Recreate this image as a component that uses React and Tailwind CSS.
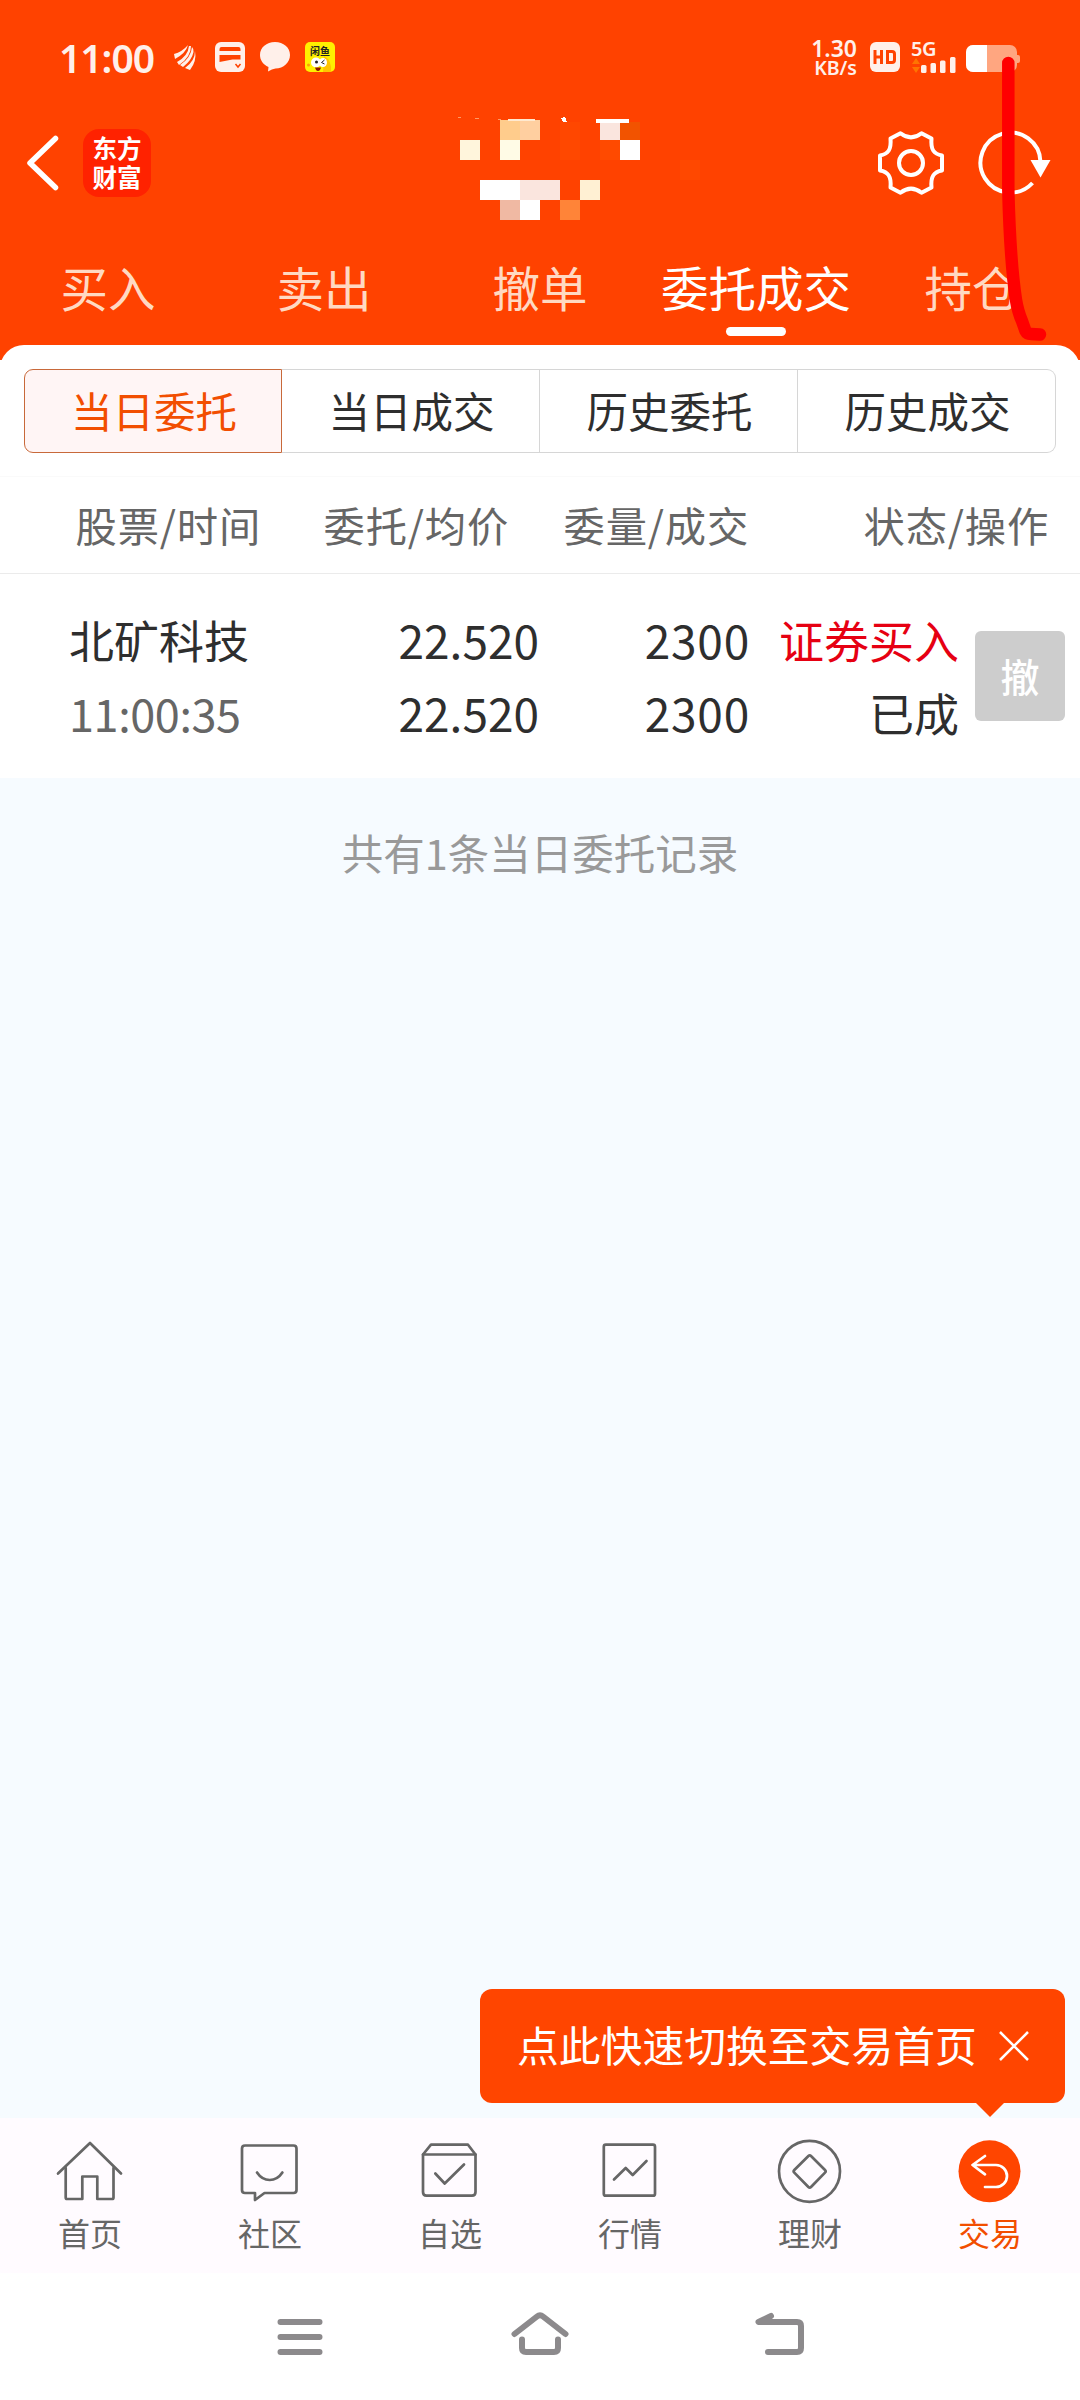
import React from "react";

const tabs = ["买入", "卖出", "撤单", "委托成交", "持仓"];
const segments = ["当日委托", "当日成交", "历史委托", "历史成交"];

const mosaic = [
    [500, 120, "#ffcc8c"], [520, 120, "#ffcfa0"], [560, 122, "#ff4700"], [600, 122, "#fae5de"], [620, 122, "#f25300"],
    [460, 140, "#fff5dc"], [500, 140, "#fffbe6"], [560, 140, "#ff4800"], [600, 140, "#ff4a00"], [620, 140, "#ffffff"],
    [680, 160, "#ff4800"],
    [480, 180, "#ffffff"], [500, 180, "#ffffff"], [520, 180, "#fae5de"], [540, 180, "#fae5de"], [580, 180, "#fff0d3"],
    [500, 200, "#f0b9a3"], [520, 200, "#ffffff"], [560, 200, "#ff8438"],
];

const navItems = [
    {
        label: "首页",
        icon: (
            <>
                <path d="M4 39.500 36 9l31 30.500" />
                <path d="M11.700 34v29.500q0 1.500 1.500 1.500H28.300V42.500H43.300V65H58q1.500 0 1.500-1.500V34" />
            </>
        ),
    },
    {
        label: "社区",
        icon: (
            <>
                <path d="M11 11.500H59.500q3 0 3 3V56q0 3-3 3H30.500L21 66V59H11q-3 0-3-3V14.500q0-3 3-3Z" />
                <path d="M23 38.500q5 7.500 12.700 7.500t12.700-7.500" />
            </>
        ),
    },
    {
        label: "自选",
        icon: (
            <>
                <path d="M9 20.500V58q0 3.700 3.500 3.700H58q3.500 0 3.500-3.700V20.500L54 10.700H17L9 20.500Z" />
                <path d="M9 20.500H61.500M21.300 39.500 30.700 49.500 50 30.500" />
            </>
        ),
    },
    {
        label: "行情",
        icon: (
            <>
                <rect x="9.800" y="10.700" width="51.200" height="51" rx="2" />
                <path d="M20 45.500 31.700 34l7 7L52.500 27" />
            </>
        ),
    },
    {
        label: "理财",
        icon: (
            <>
                <circle cx="35.500" cy="37.300" r="30.500" />
                <path d="M37 22 51 36q1.300 1.300 0 2.600L37 53q-1.300 1.300-2.600 0L20.300 38.600q-1.300-1.300 0-2.600L34.400 22q1.300-1.300 2.600 0Z" />
            </>
        ),
    },
    {
        label: "交易",
        active: true,
        icon: (
            <>
                <circle cx="35.500" cy="37.300" r="31" fill="#ff4500" stroke="none" />
                <path stroke="#fff" d="M31 22 18.500 31 31 40.300M18.500 31H42a11 11 0 0 1 0 22H31" />
            </>
        ),
    },
];

function StatusBar() {
    return (
        <div className="flex h-[114px] items-center text-[#fff0ea]">
            <span className="ml-[59px] w-[97px] whitespace-nowrap font-['Noto_Sans'] text-[39px] font-semibold leading-none tracking-[-1px]">11:00</span>
            <svg className="ml-[17px]" width="24" height="30" viewBox="0 0 24 30" fill="currentColor">
                <path d="M1 12Q9 10 15 3Q13 11 2 17Z" />
                <path d="M16 4h2Q18 15 6 23l-2-3Q15 14 16 4Z" />
                <path d="M19 5q2 2 1.500 5Q19 18 10 25l-3-2Q18 16 19 5Z" />
                <path d="M22 9q2 10-5 19l-5-2Q22 19 22 9Z" />
            </svg>
            <svg className="ml-[18px]" width="30" height="30" viewBox="0 0 30 30">
                <rect width="30" height="30" rx="6" fill="currentColor" />
                <path d="M4.500 9V7q0-2 2-2h17q2 0 2 2v2ZM4.500 13h21v4.500h-8L4.500 20Z" fill="#ff4200" />
                <path d="m20.500 22 2.500 3 2.500-3" fill="none" stroke="#ff4200" strokeWidth="1.500" />
            </svg>
            <svg className="ml-[15px]" width="30" height="30" viewBox="0 0 30 30" fill="currentColor">
                <path d="M15 0C23.500 0 30 5.500 30 13s-6.500 13.500-14.500 13.500Q12 27 8 29.500l.500-4.500C3 22.500 0 18 0 13 0 5.500 6.500 0 15 0Z" />
            </svg>
            <div className="ml-[15px] h-[30px] w-[30px] overflow-hidden rounded-[5px] bg-[#fff000] text-center">
                <div className="mt-[3px] font-['Noto_Sans_CJK_SC',sans-serif] text-[10px] font-bold leading-[11px] text-[#222]">闲鱼</div>
                <svg className="mx-auto" width="26" height="16" viewBox="0 0 26 16">
                    <path d="M17 0q8 4 7 16h-8Z" fill="#ffc400" />
                    <ellipse cx="9" cy="6.500" rx="5" ry="5" fill="#fff" />
                    <ellipse cx="16" cy="6.500" rx="4" ry="4.500" fill="#fff" />
                    <circle cx="9.500" cy="6" r="1.500" fill="#222" />
                    <path d="m17.500 4-3 2.500 3 1.500" fill="none" stroke="#222" />
                    <path d="M8 11.500h6q-1 3.500-3 3.500t-3-3.500Z" fill="#901500" />
                    <circle cx="1.500" cy="9" r="1.500" fill="#ffa000" />
                </svg>
            </div>

            <div className="ml-auto mr-[13px] w-[48px] whitespace-nowrap text-right font-['Noto_Sans'] font-semibold">
                <div className="text-[23px] leading-[20px]">1.30</div>
                <div className="text-[19.500px] leading-[19px]">KB/s</div>
            </div>
            <svg width="30" height="30" viewBox="0 0 30 30">
                <rect width="30" height="30" rx="6" fill="currentColor" />
                <path d="M5 8v14M11.500 8v14M5 15h6.500M17.500 9.500h4.500q2.500 0 2.500 2.500v6q0 2.500-2.500 2.500h-4.500Z" fill="none" stroke="#ff4200" strokeWidth="3" />
            </svg>
            <div className="ml-[11px] h-[31px] w-[46px]">
                <div className="h-[15px] font-['Noto_Sans'] text-[20px] font-semibold leading-[13px] tracking-[-0.500px]">5G</div>
                <svg width="46" height="16" viewBox="0 0 46 16" fill="currentColor">
                    <path d="m1 7 4-6 4 6ZM1 10h8l-4 6Z" fill="#ff7400" />
                    <rect x="10" y="8" width="5.500" height="8" rx="1.500" />
                    <rect x="19.500" y="6" width="5.500" height="10" rx="1.500" />
                    <rect x="29" y="3.500" width="5.500" height="12.500" rx="1.500" />
                    <rect x="39" y="0" width="5.500" height="16" rx="1.500" />
                </svg>
            </div>
            <div className="ml-[9px] mr-[60px] flex items-center pt-[3px]">
                <div className="h-[27px] w-[51px] overflow-hidden rounded-[7px] bg-[#ffa680]">
                    <div className="h-full w-[21px] bg-white" />
                </div>
                <div className="h-[8px] w-[3px] rounded-r-[2px] bg-[#ffa680]" />
            </div>
        </div>
    );
}

function TitleBar() {
    return (
        <div className="flex h-[98px] items-center">
            <svg className="ml-[24px]" width="36" height="58" viewBox="0 0 36 58" fill="none" stroke="#fff" strokeWidth="5.500" strokeLinecap="round" strokeLinejoin="round">
                <path d="M31.500 4.500 6 29 31.500 53.500" />
            </svg>
            <div className="ml-[23px] flex h-[68px] w-[68px] flex-col items-center justify-center rounded-[16px] bg-[#ff2200] pb-[3px] font-['Noto_Sans_CJK_SC',sans-serif] text-[24.500px] font-bold leading-[29px] text-white">
                <span>东方</span>
                <span>财富</span>
            </div>
            {/* Pixelated account name */}
            <svg className="ml-[299px] overflow-visible" width="260" height="98" viewBox="450 114 260 98" shapeRendering="crispEdges">
                {mosaic.map(([x, y, fill]) => (
                    <rect key={`${x}-${y}`} x={x} y={y} width="20" height="20" fill={fill} />
                ))}
                <rect x="508" y="119" width="27" height="2" fill="#ffe9d0" />
                <rect x="596" y="119" width="33" height="4" fill="#fff" />
                <path d="m561 118 4-1 2 5h-4Z" fill="#fff" />
                <path d="M458 117h3M475 118h4M498 119h3" stroke="#ff9a66" />
            </svg>
            <svg className="ml-[166px]" width="70" height="68" viewBox="-35 -34 70 68" fill="none" stroke="#fff" strokeWidth="4" strokeLinejoin="round">
                <path d="M-10.500-29.800Q0-21.500 10.500-29.800L20.500-24.500C19.500-13 23-9 31-7.500V7.500C23 9 19.500 13 20.500 24.500L10.500 29.800Q0 21.500-10.500 29.800L-20.500 24.500C-19.500 13-23 9-31 7.500V-7.500C-23-9-19.500-13-20.500-24.500Z" />
                <circle r="12" />
            </svg>
            <svg className="ml-[30px]" width="76" height="68" viewBox="-35 -34 76 68">
                <path d="M29.500-1A30 30 0 1 0 21.500 20" fill="none" stroke="#fff" strokeWidth="4" />
                <path d="M19.500-3h20L29.500 14.500Z" fill="#fff" />
            </svg>
        </div>
    );
}

export default function App() {
    return (
        <div className="relative flex h-[2400px] w-[1080px] flex-col overflow-hidden bg-white font-['Noto_Sans_CJK_SC',sans-serif] text-[#2e2e2e]">
            {/* --- Header --- */}
            <header className="h-[360px] shrink-0 bg-[#ff4200]">
                <StatusBar />
                <TitleBar />
                <div className="grid h-[133px] grid-cols-5">
                    {tabs.map((tab) => {
                        const active = tab === "委托成交";
                        return (
                            <div key={tab} className={`flex flex-col items-center pt-[42px] ${active ? "text-white" : "text-[#ffd9c2]"}`}>
                                <span className="whitespace-nowrap text-[47.500px] leading-[66px]">{tab}</span>
                                {active && <span className="mt-[7px] h-[9px] w-[60px] rounded-full bg-white" />}
                            </div>
                        );
                    })}
                </div>
            </header>

            {/* --- Orders --- */}
            <section className="-mt-[15px] h-[433px] shrink-0 rounded-t-[24px] bg-white pt-[24px]">
                <div className="mx-[24px] grid h-[84px] grid-cols-4">
                    {segments.map((label, i) => (
                        <div
                            key={label}
                            className={`flex items-center justify-center border pl-[2px] text-[41.500px] leading-none ${
                                i === 0
                                    ? "rounded-l-[9px] border-[#c8693a] bg-[#fff5f5] text-[#f24e00]"
                                    : "border-l-0 border-[#d6d6d6]"
                            } ${i === 3 ? "rounded-r-[9px]" : ""}`}
                        >
                            {label}
                        </div>
                    ))}
                </div>

                <div className="mt-[23px] flex h-[98px] items-center border-y border-t-[#fafafa] border-b-[#ebebeb] text-[41.300px] leading-none tracking-[0.800px] text-[#666]">
                    <span className="w-[261px] text-right">股票/时间</span>
                    <span className="w-[248px] text-right">委托/均价</span>
                    <span className="w-[240px] text-right">委量/成交</span>
                    <span className="w-[300px] text-right">状态/操作</span>
                </div>

                <div className="flex h-[204px] items-center text-[45px] leading-[73px]">
                    <div className="w-[260px] pl-[69px]">
                        <div className="whitespace-nowrap">北矿科技</div>
                        <div className="text-[#666] tracking-[-0.400px]">11:00:35</div>
                    </div>
                    <div className="w-[279px] text-right text-[46px]">
                        <div>22.520</div>
                        <div>22.520</div>
                    </div>
                    <div className="w-[211px] text-right text-[46px] tracking-[0.800px]">
                        <div>2300</div>
                        <div>2300</div>
                    </div>
                    <div className="w-[209px] text-right">
                        <div className="text-[#e60012]">证券买入</div>
                        <div>已成</div>
                    </div>
                    <button className="ml-[16px] h-[90px] w-[90px] rounded-[6px] bg-[#cdcdcd] pb-[2px] text-[39px] font-medium leading-none text-white">撤</button>
                </div>
            </section>

            <main className="h-[1340px] shrink-0 bg-[#f6fbff] pt-[44px] text-center text-[41.500px] leading-[60px] text-[#999]">
                共有1条当日委托记录
            </main>

            {/* --- Bottom navigation --- */}
            <nav className="relative grid h-[155px] shrink-0 grid-cols-6 bg-[#fffbff]">
                <div className="absolute -top-[129px] right-[15px] flex h-[114px] w-[585px] items-center rounded-[12px] bg-[#ff4500] pl-[37px] text-white">
                    <span className="whitespace-nowrap pb-[3px] text-[41.800px] leading-none">点此快速切换至交易首页</span>
                    <svg className="ml-[21px]" width="32" height="32" viewBox="0 0 32 32" stroke="#fff" strokeWidth="2.500">
                        <path d="m2 2 28 28M30 2 2 30" />
                    </svg>
                    <svg className="absolute left-[495px] top-[113px]" width="30" height="16" viewBox="0 0 30 16" fill="#ff4500">
                        <path d="M0 0h30L15 15Z" />
                    </svg>
                </div>
                {navItems.map((item) => (
                    <div key={item.label} className={`flex flex-col items-center pt-[16px] ${item.active ? "text-[#f24e00]" : "text-[#666]"}`}>
                        <svg width="72" height="72" viewBox="0 0 72 72" fill="none" stroke="#666" strokeWidth="2.700" strokeLinecap="round" strokeLinejoin="round">
                            {item.icon}
                        </svg>
                        <span className="mt-[6px] text-[32px] leading-[40px]">{item.label}</span>
                    </div>
                ))}
            </nav>

            {/* --- System keys --- */}
            <div className="flex h-[127px] shrink-0 justify-center gap-[180px] pt-[34px]">
                {[
                    "M10.500 15H49.500M10.500 30H49.500M10.500 45H49.500",
                    "M4.500 27 27 9.500Q30 7 33 9.500L55.500 27M12 32.500V41q0 4 4 4H44q4 0 4-4V32.500",
                    "M21 9 8.500 15H47q4 0 4 4V41q0 4-4 4H18",
                ].map((d) => (
                    <svg key={d} width="60" height="60" viewBox="0 0 60 60" fill="none" stroke="#8c8a8c" strokeWidth="6" strokeLinecap="round" strokeLinejoin="round">
                        <path d={d} />
                    </svg>
                ))}
            </div>

            {/* Red marker stroke over the header */}
            <svg className="absolute left-[990px] top-[50px]" width="70" height="300" viewBox="990 50 70 300" fill="none" stroke="#ff0000" strokeWidth="12.500" strokeLinecap="round" strokeLinejoin="round">
                <path d="M1008.300 63V190Q1010 260 1016 300Q1018 312 1022 321L1025.500 331Q1027 334 1031 334L1040 334.500" />
            </svg>
        </div>
    );
}
